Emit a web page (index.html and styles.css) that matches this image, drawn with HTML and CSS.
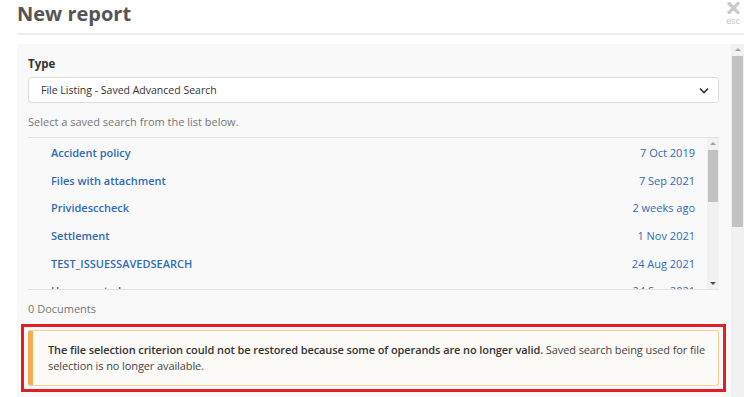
FILE: index.html
```html
<!DOCTYPE html>
<html>
<head>
<meta charset="utf-8">
<link rel="stylesheet" href="styles.css">
</head>
<body>
<div class="modal">
  <div class="header">
    <h1 class="title">New report</h1>
    <div class="close">
      <svg class="close-x" width="13" height="12" viewBox="0 0 13 12"><path d="M2 1.5 L11 10.5 M11 1.5 L2 10.5" stroke="#cbcbcb" stroke-width="3.2" stroke-linecap="round" fill="none"/></svg>
      <span class="close-esc">esc</span>
    </div>
  </div>
  <div class="body-wrap">
    <div class="body">
      <label class="label">Type</label>
      <div class="select">
        <span>File Listing - Saved Advanced Search</span>
        <svg class="chev" width="10" height="7" viewBox="0 0 10 7"><path d="M1 1.5 L5 5.5 L9 1.5" fill="none" stroke="#333" stroke-width="1.6"/></svg>
      </div>
      <p class="hint">Select a saved search from the list below.</p>
      <div class="list-wrap">
        <ul class="list">
          <li class="row"><span class="name">Accident policy</span><span class="date">7 Oct 2019</span></li>
          <li class="row"><span class="name">Files with attachment</span><span class="date">7 Sep 2021</span></li>
          <li class="row"><span class="name">Prividesccheck</span><span class="date">2 weeks ago</span></li>
          <li class="row"><span class="name">Settlement</span><span class="date">1 Nov 2021</span></li>
          <li class="row"><span class="name">TEST_ISSUESSAVEDSEARCH</span><span class="date">24 Aug 2021</span></li>
          <li class="row"><span class="name">Unsupported</span><span class="date">24 Sep 2021</span></li>
        </ul>
        <div class="sb-inner">
          <div class="sb-arrow up"></div>
          <div class="sb-thumb-inner"></div>
          <div class="sb-space"></div>
          <div class="sb-arrow down"></div>
        </div>
      </div>
      <p class="count">0 Documents</p>
      <div class="highlight">
        <div class="alert"><b class="strong">The file selection criterion could not be restored because some of operands are no longer valid.</b> Saved search being used for file selection is no longer available.</div>
      </div>
    </div>
    <div class="sb-outer">
      <div class="sb-arrow up"></div>
      <div class="sb-thumb-outer"></div>
    </div>
  </div>
</div>
</body>
</html>
```
FILE: styles.css
```css
* { box-sizing: border-box; }
html, body { margin: 0; padding: 0; background: #fff; overflow: hidden; }
body { font-family: "Open Sans", "Liberation Sans", sans-serif; color: #333; width: 750px; height: 397px; }

.modal { padding: 0 0 0 17px; }

.header {
  width: 727px;
  height: 35px;
  border-bottom: 2px solid #ececec;
  display: flex;
  justify-content: space-between;
  align-items: flex-start;
}
.title {
  margin: 0;
  font-size: 20px;
  font-weight: 700;
  color: #555;
  line-height: 28px;
}
.close {
  display: flex;
  flex-direction: column;
  align-items: center;
  width: 20px;
  padding-top: 2px;
  margin-right: 1px;
}
.close-x { display: block; }
.close-esc { font-size: 9px; line-height: 10px; color: #c4c4c4; margin-top: 2px; }

.body-wrap {
  margin-top: 9px;
  display: flex;
  width: 727px;
  height: 360px;
}
.body {
  flex: 1;
  background: #f9f9f9;
  padding: 12px 12px 0 11px;
}
.label {
  display: block;
  font-size: 11.5px;
  font-weight: 700;
  line-height: 16px;
}
.select {
  margin-top: 5px;
  height: 26px;
  background: #fff;
  border: 1px solid #dcdcdc;
  border-radius: 3px;
  display: flex;
  align-items: center;
  justify-content: space-between;
  padding: 0 9px 0 12px;
  font-size: 10.5px;
}
.chev { display: block; }
.hint {
  margin: 11px 0 0;
  font-size: 11px;
  line-height: 16px;
  color: #777;
}
.list-wrap {
  margin-top: 7px;
  border-top: 1px solid #e2e2e2;
  border-bottom: 1px solid #e2e2e2;
  height: 153px;
  display: flex;
  overflow: hidden;
}
.list {
  flex: 1;
  list-style: none;
  margin: 0;
  padding: 1px 12px 0 23px;
}
.row {
  display: flex;
  justify-content: space-between;
  align-items: center;
  height: 27.6px;
  font-size: 11px;
  color: #2f6bb5;
}
.name { font-weight: 600; }
.sb-inner {
  width: 12px;
  background: #f1f1f1;
  display: flex;
  flex-direction: column;
  align-items: center;
}
.sb-arrow { width: 12px; height: 12px; position: relative; }
.sb-arrow.up::after, .sb-arrow.down::after {
  content: "";
  position: absolute;
  left: 3px;
  width: 0; height: 0;
  border-left: 3px solid transparent;
  border-right: 3px solid transparent;
}
.sb-arrow.up::after { top: 4px; border-bottom: 3px solid #a3a3a3; }
.sb-arrow.down::after { top: 5px; border-top: 3px solid #505050; }
.sb-thumb-inner { width: 10px; height: 52px; background: #c1c1c1; }
.sb-space { flex: 1; }

.count {
  margin: 11px 0 0;
  font-size: 11px;
  line-height: 16px;
  color: #777;
}
.highlight {
  margin: 7px -7px 0 -7px;
  border: 3px solid #e51d27;
  padding: 3px 4px;
}
.alert {
  background: #fdfbf7;
  border: 1px solid #f2cf96;
  border-left: 5px solid #f4ad52;
  border-radius: 3px;
  padding: 11px 8px 11px 15px;
  font-size: 11px;
  letter-spacing: -0.1px;
  line-height: 16px;
  color: #444;
}
.strong { color: #333; font-weight: 600; }

.sb-outer {
  width: 13px;
  background: #f1f1f1;
  display: flex;
  flex-direction: column;
  align-items: center;
}
.sb-thumb-outer { width: 11px; height: 171px; background: #c1c1c1; }
```
